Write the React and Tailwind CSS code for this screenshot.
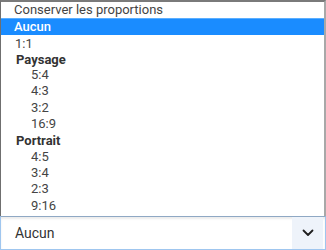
import React from "react";

const rows = [
  { label: "Conserver les proportions", kind: "head" },
  { label: "Aucun", kind: "selected" },
  { label: "1:1", kind: "item" },
  { label: "Paysage", kind: "group" },
  { label: "5:4", kind: "sub" },
  { label: "4:3", kind: "sub" },
  { label: "3:2", kind: "sub" },
  { label: "16:9", kind: "sub" },
  { label: "Portrait", kind: "group" },
  { label: "4:5", kind: "sub" },
  { label: "3:4", kind: "sub" },
  { label: "2:3", kind: "sub" },
  { label: "9:16", kind: "sub" },
];

export default function App() {
  return (
    <div className="w-[326px] h-[250px] bg-white flex flex-col" style={{ fontFamily: "Roboto, 'Liberation Sans', sans-serif" }}>
      {/* Open list */}
      <div className="h-[216px] border-t-2 border-l border-r-2 border-t-[#7a7a7a] border-l-[#6f6f6f] border-r-[#a8a8a8] flex flex-col">
        {rows.map((r, i) => {
          let cls = "h-[16.3px] leading-[15px] text-[13px] text-[#444] pl-[13px]";
          if (r.kind === "selected") cls = "h-[16.3px] leading-[16px] text-[13px] text-white font-medium pl-[13px] bg-[#1a8cff] border-t border-[#5aaeff]";
          if (r.kind === "item") cls = "h-[16.3px] leading-[17px] text-[13px] text-[#444] pl-[14px]";
          if (r.kind === "group") cls = "h-[16.3px] leading-[17px] text-[13px] text-[#333] font-bold pl-[15px]";
          if (r.kind === "sub") cls = "h-[16.3px] leading-[16px] text-[13px] text-[#444] pl-[30px]";
          return (
            <div key={i} className={cls}>
              {r.label}
            </div>
          );
        })}
      </div>

      {/* Select */}
      <div className="flex-1 flex items-stretch border border-[#9fc6ef] border-t-[#8fa8c4] shadow-[inset_0_2px_2px_rgba(0,0,0,0.08)]">
        <div className="flex-1 flex items-center pl-[14px] text-[14px] text-[#333]">Aucun</div>
        <div className="w-[31px] bg-[#eef3fa] flex items-center justify-center mr-[2px]">
          <svg width="12" height="8" viewBox="0 0 12 8" fill="none">
            <path d="M1.5 1.5 L6 6 L10.5 1.5" stroke="#1f1f1f" strokeWidth="1.8" strokeLinecap="round" strokeLinejoin="round" />
          </svg>
        </div>
      </div>
    </div>
  );
}
